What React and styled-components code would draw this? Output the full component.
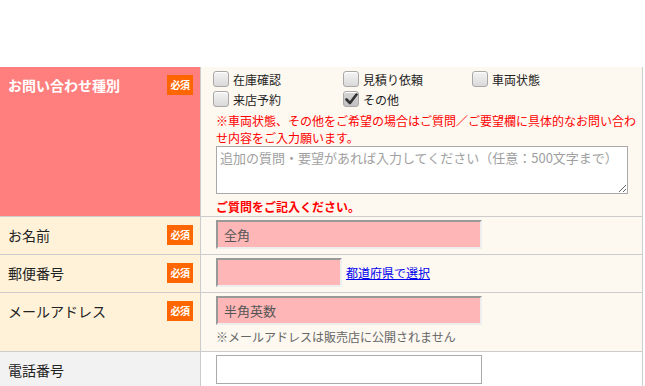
import styled, { createGlobalStyle } from "styled-components";

const GlobalStyle = createGlobalStyle`
  body {
    margin: 0;
    background: #fff;
    font-family: "Noto Sans CJK JP", "Noto Sans", sans-serif;
    color: #222;
  }
`;

const options = [
  { label: "在庫確認", checked: false },
  { label: "見積り依頼", checked: false },
  { label: "車両状態", checked: false },
  { label: "来店予約", checked: false },
  { label: "その他", checked: true },
];

const CheckIcon = () => (
  <svg width="13" height="12" viewBox="0 0 13 12">
    <path d="M1.5 6.5 L5 10 L11.5 1.5" fill="none" stroke="#333" strokeWidth="2.6" strokeLinecap="round" strokeLinejoin="round" />
  </svg>
);

const Badge = () => <StyledBadge>必須</StyledBadge>;

// prettier-ignore
const Row = ({ label, required, tone, children, pad }) => (
  <StyledRow>
    <LabelCell $tone={tone}>
      <span>{label}</span>
      {required && <Badge />}
    </LabelCell>
    <ContentCell $tone={tone} $pad={pad}>{children}</ContentCell>
  </StyledRow>
);

const App = () => {
  return (
    <>
      <GlobalStyle />
      <Page>
        <Table>
          <Row label="お問い合わせ種別" required tone="alert" pad="2px 3px 1px 15px">
            <CheckGrid>
              {options.map((o) => (
                <CheckItem key={o.label}>
                  <Box $checked={o.checked}>{o.checked && <CheckIcon />}</Box>
                  {o.label}
                </CheckItem>
              ))}
            </CheckGrid>
            <Notice>
              ※車両状態、その他をご希望の場合はご質問／ご要望欄に具体的なお問い合わ
              <br />
              せ内容をご入力願います。
            </Notice>
            <TextArea placeholder="追加の質問・要望があれば入力してください（任意：500文字まで）" />
            <ErrorText>ご質問をご記入ください。</ErrorText>
          </Row>
          <Row label="お名前" required>
            <Field $w={266} placeholder="全角" />
          </Row>
          <Row label="郵便番号" required>
            <Inline>
              <Field $w={126} />
              <a href="/">都道府県で選択</a>
            </Inline>
          </Row>
          <Row label="メールアドレス" required>
            <Field $w={266} placeholder="半角英数" />
            <Hint>※メールアドレスは販売店に公開されません</Hint>
          </Row>
          <Row label="電話番号" tone="plain">
            <Field $w={266} $plain />
          </Row>
        </Table>
      </Page>
    </>
  );
};
export default App;

/********************* styled component *************************/
const Page = styled.div`
  padding-top: 67px;
`;

const Table = styled.div`
  width: 643px;
  border-right: 1px solid #ccc;
  box-sizing: border-box;
`;

const StyledRow = styled.div`
  display: grid;
  grid-template-columns: 201px 1fr;
  border-bottom: 1px solid #ccc;
`;

const LabelCell = styled.div`
  display: flex;
  justify-content: space-between;
  align-items: flex-start;
  padding: 8px 7px 8px 8px;
  border-right: 1px solid #ccc;
  font-size: 14px;
  line-height: 20px;
  background: ${({ $tone }) =>
    $tone === "alert" ? "#ff7f7f" : $tone === "plain" ? "#f2f2f2" : "#fff2d9"};
  color: ${({ $tone }) => ($tone === "alert" ? "#fff" : "#222")};
  font-weight: ${({ $tone }) => ($tone === "alert" ? 700 : 400)};
`;

const StyledBadge = styled.span`
  display: inline-flex;
  align-items: center;
  justify-content: center;
  width: 26px;
  height: 20px;
  background: #ff6600;
  color: #fff;
  font-size: 10px;
  font-weight: 700;
  letter-spacing: -0.5px;
  flex-shrink: 0;
`;

const ContentCell = styled.div`
  padding: ${({ $pad }) => $pad || "3px 5px 5px 15px"};
  background: ${({ $tone }) => ($tone === "plain" ? "#fff" : "#fdf8f0")};
  font-size: 12px;
`;

const CheckGrid = styled.div`
  display: grid;
  grid-template-columns: 130px 129px 130px;
  margin-left: -3px;
`;

const CheckItem = styled.label`
  display: flex;
  align-items: center;
  gap: 4px;
  height: 20px;
  font-size: 12px;
  color: #222;
`;

const Box = styled.span`
  display: inline-flex;
  align-items: center;
  justify-content: center;
  width: 16px;
  height: 16px;
  box-sizing: border-box;
  border: 1px solid #a8a8a8;
  border-radius: 3px;
  background: ${({ $checked }) =>
    $checked
      ? "linear-gradient(#d4d4d4, #c2c2c2)"
      : "linear-gradient(#f4f4f4, #d9d9d9)"};
  box-shadow: inset 0 1px 0 #fff;
`;

const Notice = styled.p`
  margin: 3px 0 0;
  color: #ff0000;
  font-size: 12px;
  line-height: 17px;
  white-space: nowrap;
`;

const TextArea = styled.textarea`
  display: block;
  width: 412px;
  height: 48px;
  box-sizing: border-box;
  margin: 0;
  padding: 2px 3px;
  border: 1px solid #a9a9a9;
  background: #fff;
  font-family: "Noto Sans CJK JP", sans-serif;
  font-size: 13px;
  line-height: 17px;
  &::placeholder {
    color: #a0a0a0;
  }
`;

const ErrorText = styled.p`
  margin: 4px 0 0;
  color: #ff0000;
  font-size: 12px;
  font-weight: 700;
  line-height: 17px;
`;

const Field = styled.input`
  display: block;
  width: ${({ $w }) => $w}px;
  height: 29px;
  box-sizing: border-box;
  margin: 0;
  padding: 0 6px;
  font-family: "Noto Sans CJK JP", sans-serif;
  font-size: 13px;
  background: ${({ $plain }) => ($plain ? "#fff" : "#ffb6b6")};
  border: ${({ $plain }) => ($plain ? "1px solid #aaa" : "2px solid")};
  border-color: ${({ $plain }) =>
    $plain ? "#aaa" : "#999 #eee #eee #999"};
  &::placeholder {
    color: #555;
  }
`;

const Inline = styled.div`
  display: flex;
  align-items: center;
  gap: 4px;

  a {
    color: #0000ee;
    font-size: 12px;
    text-decoration: underline;
  }
`;

const Hint = styled.p`
  margin: 0;
  padding-top: 3px;
  color: #666;
  font-size: 12px;
  line-height: 18px;
`;
